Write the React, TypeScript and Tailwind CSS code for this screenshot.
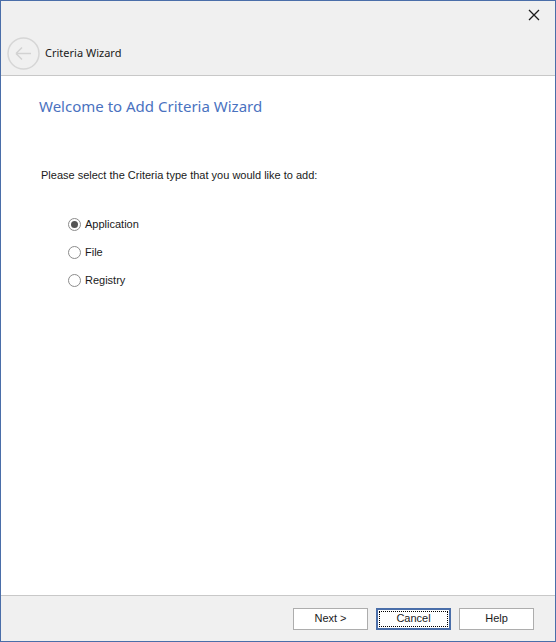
import React from 'react';

const font = { fontFamily: '"Liberation Sans", Arial, sans-serif' };
const headFont = { fontFamily: '"Noto Sans", "Segoe UI", sans-serif' };

function Radio({ label, checked }: { label: string; checked?: boolean }) {
    return (
        <label className="flex items-center gap-[4px] h-[16px] text-[11px] text-[#1a1a1a]">
            <span className="w-[13px] h-[13px] rounded-full border border-[#8c8c8c] bg-white flex items-center justify-center">
                {checked && <span className="w-[7px] h-[7px] rounded-full bg-[#555]" />}
            </span>
            <span className="leading-none">{label}</span>
        </label>
    );
}

export default function App() {
    return (
        <div className="w-[556px] h-[642px] border border-[#4a6ea9] flex flex-col bg-[#f0f0f0]" style={font}>
            {/* Cabecera */}
            <div className="h-[74px] flex flex-col">
                <div className="flex justify-end pt-[8px] pr-[15px]">
                    <svg width="12" height="12" viewBox="0 0 12 12">
                        <path d="M1 1 L11 11 M11 1 L1 11" stroke="#1a1a1a" strokeWidth="1.3" />
                    </svg>
                </div>
                <div className="flex items-center mt-[16px] pl-[6px] gap-[5px]">
                    <svg width="33" height="33" viewBox="0 0 33 33">
                        <circle cx="16.5" cy="16.5" r="15.5" fill="none" stroke="#d6d6d6" strokeWidth="1.5" />
                        <path d="M9 16.5 H24 M9 16.5 L15 10.5 M9 16.5 L15 22.5" fill="none" stroke="#d2d2d2" strokeWidth="1.5" />
                    </svg>
                    <span className="text-[11px] text-[#1a1a1a]" style={headFont}>Criteria Wizard</span>
                </div>
            </div>

            {/* Contenido */}
            <div className="flex-1 bg-white border-t border-b border-[#c8c8c8] pl-[38px] pt-[19px]">
                <h1 className="text-[15px] text-[#4a72bf] leading-[22px]" style={headFont}>Welcome to Add Criteria Wizard</h1>
                <p className="mt-[50px] pl-[2px] text-[11px] text-[#1a1a1a]">Please select the Criteria type that you would like to add:</p>
                <div className="mt-[33px] pl-[29px] flex flex-col gap-[12px]">
                    <Radio label="Application" checked />
                    <Radio label="File" />
                    <Radio label="Registry" />
                </div>
            </div>

            {/* Botones */}
            <div className="h-[45px] flex items-center justify-end gap-[8px] pr-[21px]">
                <button className="w-[75px] h-[22px] bg-white border border-[#adadad] text-[11px] text-[#1a1a1a]">Next &gt;</button>
                <button className="w-[75px] h-[22px] bg-white border-2 border-[#4a6ea9] text-[11px] text-[#1a1a1a] p-[1px]">
                    <span className="w-full h-full flex items-center justify-center border border-dotted border-black">Cancel</span>
                </button>
                <button className="w-[75px] h-[22px] bg-white border border-[#adadad] text-[11px] text-[#1a1a1a]">Help</button>
            </div>
        </div>
    );
}
